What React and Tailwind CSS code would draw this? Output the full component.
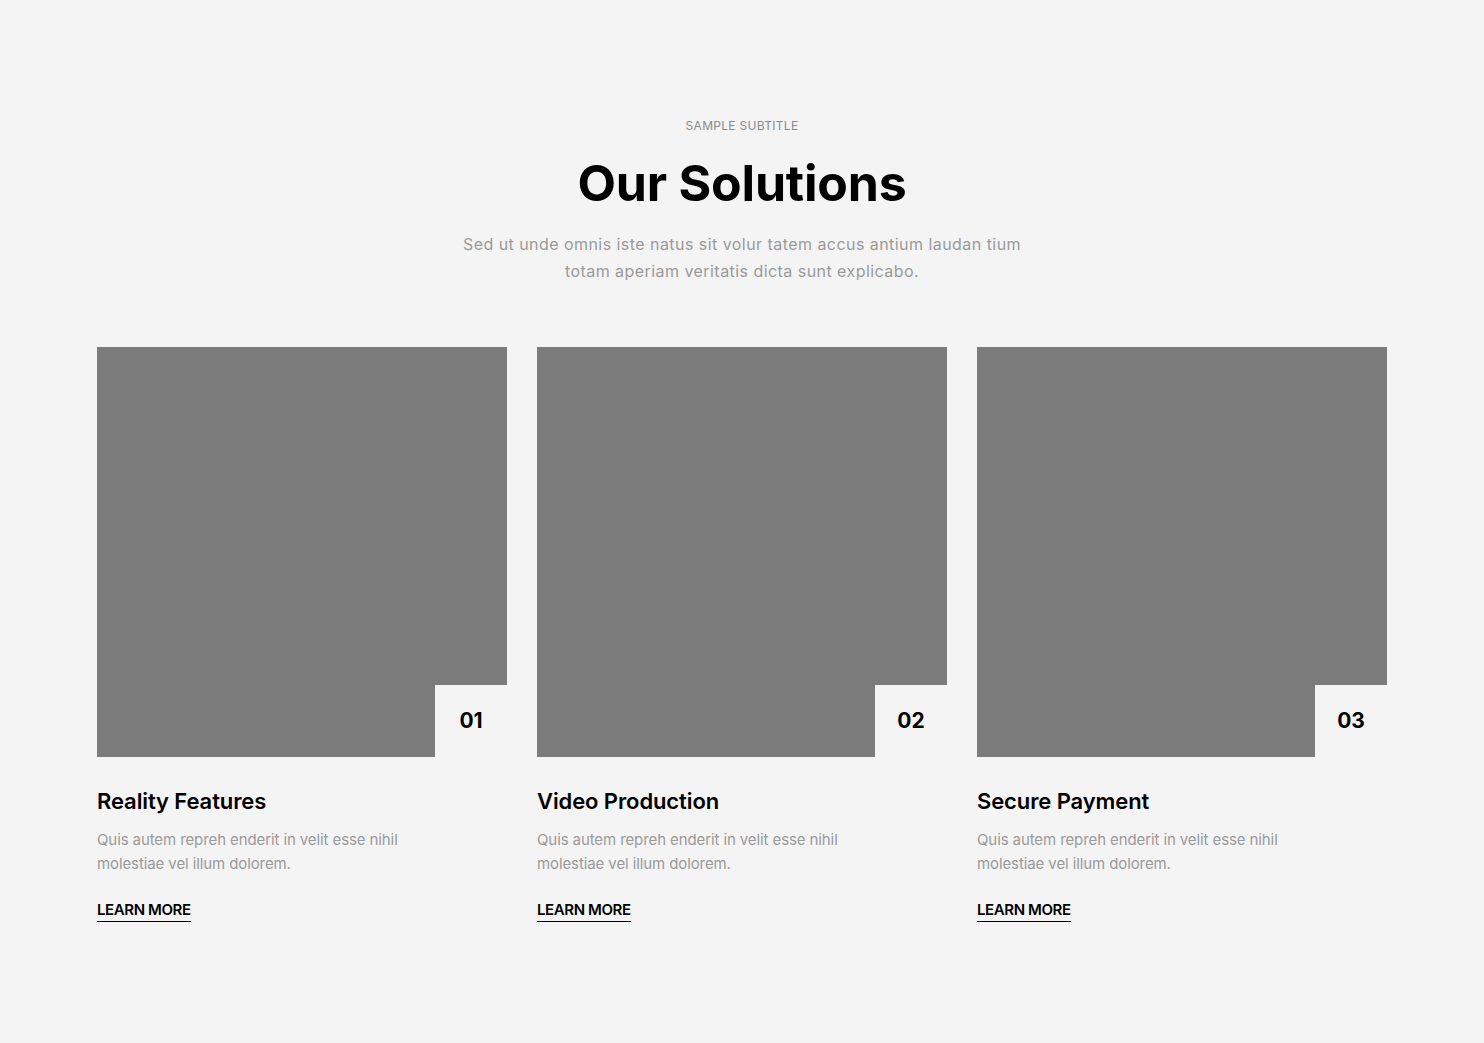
export default function App() {
  const cards = [
    { n: "01", t: "Reality Features" },
    { n: "02", t: "Video Production" },
    { n: "03", t: "Secure Payment" },
  ];
  return (
    <div className="min-h-[1043px] bg-[#f4f4f4] font-['Inter',sans-serif]">
      <div className="mx-auto w-[1290px] pt-[119px]">
        <div className="flex flex-col items-center text-center">
          <div className="text-[12px] leading-[14px] uppercase text-[#8a8a8a] tracking-[0.3px]">Sample Subtitle</div>
          <h2 className="mt-[20px] text-[50px] leading-[60px] font-bold text-black tracking-[-0.2px]">Our Solutions</h2>
          <p className="mt-[18px] w-[600px] text-[16px] leading-[27px] text-[#9a9a9a] tracking-[0.45px]">
            Sed ut unde omnis iste natus sit volur tatem accus antium laudan tium<br />totam aperiam veritatis dicta sunt explicabo.
          </p>
        </div>
        <div className="mt-[62px] grid grid-cols-3 gap-[30px]">
          {cards.map((c) => (
            <div key={c.n} className="flex flex-col">
              <div className="relative h-[410px] bg-[#7b7b7c]">
                <div className="absolute right-0 bottom-0 flex h-[72px] w-[72px] items-center justify-center bg-[#f4f4f4] text-[21px] font-bold text-black">
                  {c.n}
                </div>
              </div>
              <h3 className="mt-[29px] text-[22px] leading-[30px] font-semibold text-black tracking-[-0.1px]">{c.t}</h3>
              <p className="mt-[12px] w-[330px] text-[15px] leading-[24px] text-[#9a9a9a] tracking-[-0.1px]">
                Quis autem repreh enderit in velit esse nihil molestiae vel illum dolorem.
              </p>
              <div className="mt-[21px]">
                <a className="inline-block border-b border-black pb-[1px] text-[15px] leading-[20px] font-semibold uppercase text-black tracking-[-0.4px]">
                  Learn More
                </a>
              </div>
            </div>
          ))}
        </div>
      </div>
    </div>
  );
}
